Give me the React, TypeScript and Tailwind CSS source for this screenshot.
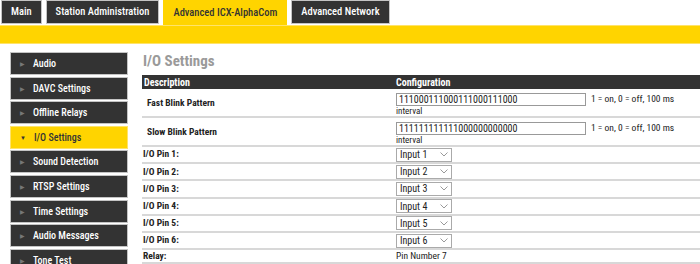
import React from 'react';

const tabs = [
  { label: 'Main', active: false },
  { label: 'Station Administration', active: false },
  { label: 'Advanced ICX-AlphaCom', active: true },
  { label: 'Advanced Network', active: false },
];

const menu = [
  'Audio',
  'DAVC Settings',
  'Offline Relays',
  'I/O Settings',
  'Sound Detection',
  'RTSP Settings',
  'Time Settings',
  'Audio Messages',
  'Tone Test',
];

const pins = [1, 2, 3, 4, 5, 6];

function Chevron() {
  return (
    <svg width="8" height="5" viewBox="0 0 8 5" className="shrink-0">
      <path d="M0.5 0.5 L4 4 L7.5 0.5" fill="none" stroke="#999" strokeWidth="1" />
    </svg>
  );
}

function PatternRow({ label, value }: { label: string; value: string }) {
  return (
    <div className="flex h-[29px] border-b-2 border-[#d8d8d8]">
      <div className="w-[254px] pl-[5px] pt-[2px] flex items-center font-bold text-[9.5px] text-[#222]">{label}</div>
      <div className="flex flex-col pt-[3px]">
        <div className="flex items-center">
          <div className="w-[190px] h-[13px] border border-[#999] bg-white flex items-center px-[2px] text-[10px] text-[#222]">
            {value}
          </div>
          <span className="ml-[5px] text-[9.5px] text-[#222]">1 = on, 0 = off, 100 ms</span>
        </div>
        <span className="text-[9px] leading-[11px] text-[#222]">interval</span>
      </div>
    </div>
  );
}

export default function App() {
  return (
    <div className="w-[700px] h-[264px] overflow-hidden bg-white" style={{ fontFamily: '"Roboto Condensed", Roboto, sans-serif' }}>
      <div className="flex items-start gap-[4px] pl-px h-[25px]">
        {tabs.map((t) => (
          <div
            key={t.label}
            className={
              t.active
                ? 'h-[25px] px-[10px] flex items-center bg-[#ffd400] text-[#333] text-[10.5px] font-medium'
                : 'h-[24px] px-[9px] flex items-center bg-[#333] border border-[#c4c4c4] text-white text-[10.5px] font-medium'
            }
          >
            {t.label}
          </div>
        ))}
      </div>
      <div className="h-[19px] bg-[#ffd400] border-y border-[#ffe36a]" />
      <div className="flex pt-[8px]">
        <div className="ml-[10px] w-[118px] flex flex-col gap-[1.6px] shrink-0">
          {menu.map((m) =>
            m === 'I/O Settings' ? (
              <div key={m} className="h-[23px] bg-[#ffd400] border border-[#ffe36a] flex items-center pl-[9px] text-[10px] font-medium text-[#333]">
                <span className="text-[6px] mr-[8px] text-[#333]">▼</span>
                {m}
              </div>
            ) : (
              <div key={m} className="h-[23px] bg-[#333] border border-[#c4c4c4] flex items-center pl-[9px] text-[10px] font-medium text-white">
                <span className="text-[6px] mr-[8px] text-[#777]">▶</span>
                {m}
              </div>
            )
          )}
        </div>
        <div className="ml-[14px] flex-1">
          <div className="h-[22px] text-[15px] font-bold text-[#9a9a9a] leading-[18px] pl-px">I/O Settings</div>
          <div className="flex h-[14px] mt-px bg-[#333] text-white text-[10px] font-bold items-center">
            <div className="w-[254px] pl-[2px]">Description</div>
            <div>Configuration</div>
          </div>
          <PatternRow label="Fast Blink Pattern" value="111000111000111000111000" />
          <PatternRow label="Slow Blink Pattern" value="111111111111000000000000" />
          {pins.map((p) => (
            <div key={p} className="flex h-[17.2px] items-center border-b-2 border-[#d8d8d8]">
              <div className="w-[254px] pl-[1px] font-bold text-[9.5px] text-[#222]">I/O Pin {p}:</div>
              <div className="w-[56px] h-[14px] border border-[#aaa] bg-white flex items-center justify-between px-[3px] text-[10px] text-[#222]">
                <span>Input {p}</span>
                <Chevron />
              </div>
            </div>
          ))}
          <div className="flex h-[14px] items-center border-b-2 border-[#d8d8d8]">
            <div className="w-[254px] pl-[1px] font-bold text-[9.5px] text-[#222]">Relay:</div>
            <div className="text-[9.5px] text-[#222]">Pin Number 7</div>
          </div>
        </div>
      </div>
    </div>
  );
}
